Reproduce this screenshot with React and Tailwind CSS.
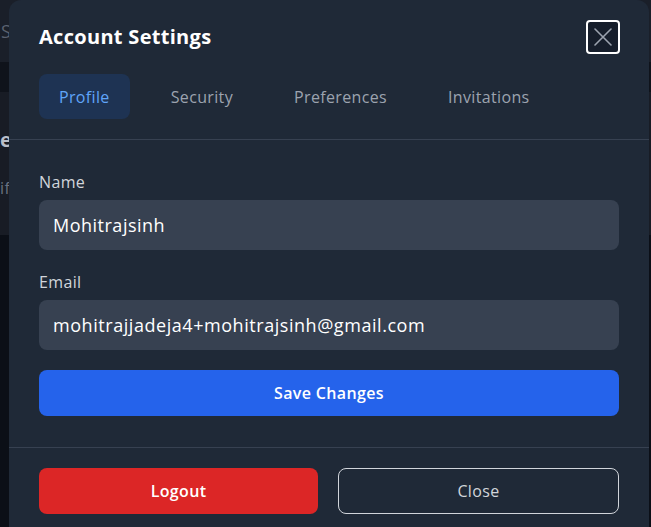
import React, { useState } from "react";

const tabs = ["Profile", "Security", "Preferences", "Invitations"];

const App = () => {
  const [activeTab, setActiveTab] = useState("Profile");

  return (
    <div
      className="relative w-[651px] h-[527px] overflow-hidden bg-[#0b0f17] tracking-[0.35px]"
      style={{ fontFamily: "'Open Sans', 'Noto Sans', sans-serif" }}
    >
      {/* page behind the modal (dimmed) */}
      <div className="flex flex-col">
        <div className="h-[62px] bg-[#1a1f29] flex items-center pl-[1px] text-[#5b6270] text-lg">S</div>
        <div className="h-[30px] bg-[#0f131b]" />
        <div className="h-[143px] bg-[#181c25] flex flex-col pt-[38px]">
          <div className="text-[#b9bec8] text-xl font-bold leading-none">e</div>
          <div className="text-[#6b7280] text-base mt-[30px] leading-none">if</div>
        </div>
      </div>

      {/* modal */}
      <div className="absolute left-[9px] top-0 w-[640px] h-[560px] bg-[#1f2937] rounded-xl">
        <div className="px-[30px] pt-[20px] pb-5 border-b border-[#374151]">
          <div className="flex items-center justify-between">
            <h2 className="text-[20px] font-bold text-white leading-7 tracking-[0.3px]">Account Settings</h2>
            <button className="w-[34px] h-[34px] mr-[-1px] flex items-center justify-center rounded-[4px] border-2 border-white bg-[#161e2b] text-[#9ca3af]">
              <svg width="18" height="18" viewBox="0 0 18 18" fill="none" stroke="currentColor" strokeWidth="1.6" strokeLinecap="round">
                <path d="M1 1L17 17M17 1L1 17" />
              </svg>
            </button>
          </div>
          <div className="flex gap-[21px] mt-5">
            {tabs.map((tab) => (
              <button
                key={tab}
                onClick={() => setActiveTab(tab)}
                className={
                  tab === activeTab
                    ? "h-[45px] px-5 rounded-lg bg-[#1e3353] text-[#60a5fa] text-base"
                    : "h-[45px] px-5 rounded-lg text-[#9ca3af] text-base"
                }
              >
                {tab}
              </button>
            ))}
          </div>
        </div>

        <div className="px-[30px] pt-[30px] pb-[31px] border-b border-[#374151]">
          <label className="block text-[#d1d5db] text-base leading-6 mb-1.5">Name</label>
          <div className="h-[50px] rounded-lg bg-[#374151] flex items-center px-[14px] text-white text-lg tracking-[0.5px]">
            Mohitrajsinh
          </div>
          <label className="block text-[#d1d5db] text-base leading-6 mb-1.5 mt-5">Email</label>
          <div className="h-[50px] rounded-lg bg-[#374151] flex items-center px-[14px] text-white text-lg tracking-[0.55px]">
            mohitrajjadeja4+mohitrajsinh@gmail.com
          </div>
          <button className="mt-5 w-full h-[46px] rounded-lg bg-[#2563eb] text-white font-semibold text-base">
            Save Changes
          </button>
        </div>

        <div className="px-[30px] pt-5 flex gap-5">
          <button className="flex-1 h-[46px] rounded-lg bg-[#dc2626] text-white font-semibold text-base">
            Logout
          </button>
          <button className="flex-1 h-[46px] rounded-lg border border-[#d1d5db] text-[#d1d5db] text-base">
            Close
          </button>
        </div>
      </div>
    </div>
  );
};

export default App;
